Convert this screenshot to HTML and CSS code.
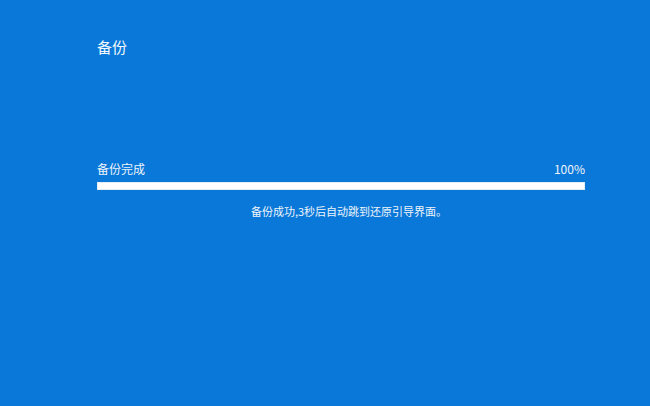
FILE: index.html
```html
<!DOCTYPE html>
<html lang="zh">
<head>
<meta charset="utf-8">
<link rel="stylesheet" href="styles.css">
</head>
<body>
<div class="page">
  <h1 class="title">备份</h1>
  <div class="progress">
    <div class="progress-head">
      <span>备份完成</span>
      <span>100%</span>
    </div>
    <div class="bar"><div class="fill"></div></div>
    <p class="msg">备份成功,3秒后自动跳到还原引导界面。</p>
  </div>
</div>
</body>
</html>
```
FILE: styles.css
```css
html, body {
  margin: 0;
  padding: 0;
  width: 650px;
  height: 406px;
  background: #0a78d8;
  overflow: hidden;
}
.page {
  padding: 37px 65px 0 97px;
  color: #ffffff;
  font-family: "Noto Sans CJK SC", "Microsoft YaHei", sans-serif;
}
.title {
  margin: 0;
  font-size: 15px;
  font-weight: normal;
  line-height: 20px;
  color: #f4f8fd;
}
.progress {
  margin-top: 104px;
}
.progress-head {
  display: flex;
  justify-content: space-between;
  font-size: 12px;
  line-height: 16px;
  color: #eef4fb;
}
.bar {
  margin-top: 5px;
  height: 8px;
  box-sizing: border-box;
  border: 1px solid #e4ecf4;
  background: #ffffff;
}
.fill {
  height: 100%;
  width: 100%;
  background: #ffffff;
}
.msg {
  margin: 14px 0 0;
  text-align: center;
  font-size: 11px;
  line-height: 14px;
  color: #eef4fb;
  padding-left: 16px;
}
```
